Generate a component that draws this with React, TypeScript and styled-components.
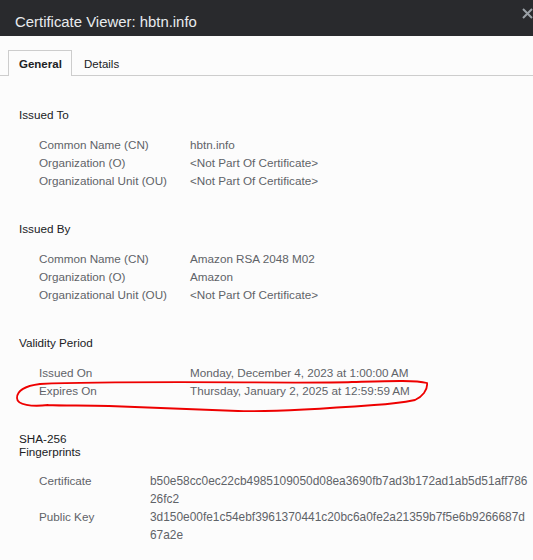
import React from "react";
import styled, { createGlobalStyle } from "styled-components";

const GlobalStyle = createGlobalStyle`
  html, body { margin: 0; padding: 0; background: #fcfcfc; }
  body { font-family: "Liberation Sans", Arial, sans-serif; }
  * { box-sizing: border-box; }
`;

const Page = styled.div`
  position: relative;
  width: 533px;
  height: 560px;
  overflow: hidden;
  background: #fcfcfc;
  display: flex;
  flex-direction: column;
`;

const TitleBar = styled.header`
  height: 36px;
  background: #292a2d;
  display: flex;
  align-items: flex-end;
  justify-content: space-between;
  padding: 0 0 5px 15px;
  position: relative;
`;

const Title = styled.h1`
  margin: 0;
  font-size: 14.9px;
  font-weight: 400;
  line-height: 18px;
  color: #e8eaed;
`;

const CloseButton = styled.button`
  position: absolute;
  top: 7px;
  right: 0px;
  width: 12px;
  height: 12px;
  padding: 0;
  border: 0;
  background: none;
  display: flex;
  align-items: center;
  justify-content: center;
`;

const TabBar = styled.nav`
  margin-top: 14px;
  height: 26px;
  display: flex;
  align-items: stretch;
  padding-left: 8px;
  border-bottom: 1px solid #cdcdcd;
`;

const Tab = styled.div<{ $active?: boolean }>`
  height: ${(p) => (p.$active ? "26px" : "25px")};
  padding: 1px ${(p) => (p.$active ? "10px" : "11px")} 0;
  display: flex;
  align-items: center;
  font-size: 11.5px;
  font-weight: ${(p) => (p.$active ? 700 : 400)};
  color: #202124;
  background: #fcfcfc;
  border: 1px solid ${(p) => (p.$active ? "#cdcdcd" : "transparent")};
  border-bottom: none;
  width: ${(p) => (p.$active ? "64px" : "auto")};
`;

const Content = styled.main`
  display: flex;
  flex-direction: column;
  padding-left: 19px;
`;

const Section = styled.section`
  margin-top: 30px;
  display: flex;
  flex-direction: column;
`;

const Heading = styled.h2<{ $twoLine?: boolean }>`
  margin: 0;
  font-size: 11.7px;
  font-weight: 400;
  color: #202124;
  line-height: ${(p) => (p.$twoLine ? "13px" : "18px")};
  padding: ${(p) => (p.$twoLine ? "1.5px 0 2.5px" : "0")};
`;

const Rows = styled.dl<{ $labelWidth: number }>`
  margin: 12px 0 0 20px;
  display: grid;
  grid-template-columns: ${(p) => p.$labelWidth}px 1fr;
  row-gap: 0;
  font-size: 11.7px;
  line-height: 18px;
  color: #5f6368;
`;

const Label = styled.dt`
  margin: 0;
  white-space: nowrap;
`;

const Value = styled.dd`
  margin: 0;
  white-space: nowrap;
`;

const HashLine = styled.span`
  display: block;
  font-size: 11.9px;
`;

const Annotation = styled.svg`
  position: absolute;
  left: 0;
  top: 0;
  pointer-events: none;
`;

type Row = [string, React.ReactNode];

const issuedTo: Row[] = [
  ["Common Name (CN)", "hbtn.info"],
  ["Organization (O)", "<Not Part Of Certificate>"],
  ["Organizational Unit (OU)", "<Not Part Of Certificate>"],
];

const issuedBy: Row[] = [
  ["Common Name (CN)", "Amazon RSA 2048 M02"],
  ["Organization (O)", "Amazon"],
  ["Organizational Unit (OU)", "<Not Part Of Certificate>"],
];

const validity: Row[] = [
  ["Issued On", "Monday, December 4, 2023 at 1:00:00\u2009AM"],
  ["Expires On", "Thursday, January 2, 2025 at 12:59:59\u2009AM"],
];

const fingerprints: Row[] = [
  [
    "Certificate",
    <>
      <HashLine>b50e58cc0ec22cb4985109050d08ea3690fb7ad3b172ad1ab5d51aff786</HashLine>
      <HashLine>26fc2</HashLine>
    </>,
  ],
  [
    "Public Key",
    <>
      <HashLine>3d150e00fe1c54ebf3961370441c20bc6a0fe2a21359b7f5e6b9266687d</HashLine>
      <HashLine>67a2e</HashLine>
    </>,
  ],
];

function RowList({ rows, labelWidth }: { rows: Row[]; labelWidth: number }) {
  return (
    <Rows $labelWidth={labelWidth}>
      {rows.map(([label, value], i) => (
        <React.Fragment key={i}>
          <Label>{label}</Label>
          <Value>{value}</Value>
        </React.Fragment>
      ))}
    </Rows>
  );
}

export default function App() {
  return (
    <>
      <GlobalStyle />
      <Page>
        <TitleBar>
          <Title>Certificate Viewer: hbtn.info</Title>
          <CloseButton aria-label="Close">
            <svg width="11" height="11" viewBox="0 0 11 11">
              <path d="M1 1 L10 10 M10 1 L1 10" stroke="#9aa0a6" strokeWidth="2" />
            </svg>
          </CloseButton>
        </TitleBar>
        <TabBar>
          <Tab $active>General</Tab>
          <Tab>Details</Tab>
        </TabBar>
        <Content>
          <Section>
            <Heading>Issued To</Heading>
            <RowList rows={issuedTo} labelWidth={151} />
          </Section>
          <Section>
            <Heading>Issued By</Heading>
            <RowList rows={issuedBy} labelWidth={151} />
          </Section>
          <Section>
            <Heading>Validity Period</Heading>
            <RowList rows={validity} labelWidth={151} />
          </Section>
          <Section>
            <Heading $twoLine>
              SHA-256
              <br />
              Fingerprints
            </Heading>
            <RowList rows={fingerprints} labelWidth={111} />
          </Section>
        </Content>
        <Annotation width="533" height="560" viewBox="0 0 533 560">
          <path
            d="M 48 405 C 32 407, 17 405, 17 398 C 17 391, 24 386, 40 384 C 140 380, 300 384, 352 382 C 390 381, 415 380, 427 383 C 428 390, 422 397, 415 400 C 400 403, 390 404, 374 405 C 320 409, 270 412, 238 411 C 180 409, 140 407, 109 406 C 85 405, 65 406, 48 405"
            fill="none"
            stroke="#ee0000"
            strokeWidth="1.8"
            strokeLinecap="round"
          />
        </Annotation>
      </Page>
    </>
  );
}
